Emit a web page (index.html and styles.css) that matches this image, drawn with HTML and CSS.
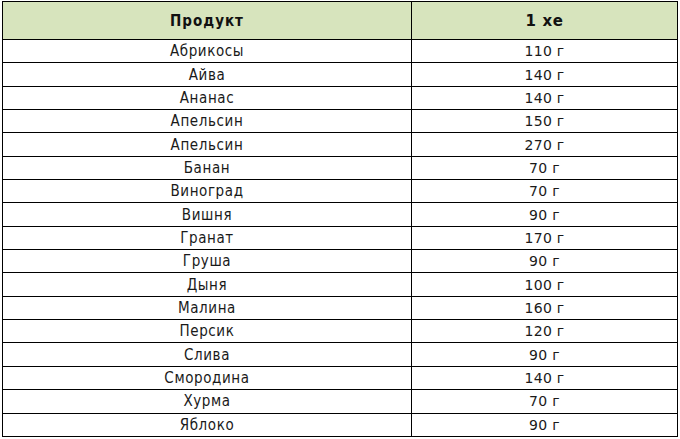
FILE: index.html
```html
<!DOCTYPE html>
<html lang="ru">
<head>
<meta charset="utf-8">
<title>ХЕ</title>
<link rel="stylesheet" href="styles.css">
</head>
<body>
<table class="xe-table">
  <thead>
    <tr class="head-row"><th class="col-product">Продукт</th><th class="col-xe">1 хе</th></tr>
  </thead>
  <tbody>
    <tr><td class="name">Абрикосы</td><td class="val">110 г</td></tr>
    <tr><td class="name">Айва</td><td class="val">140 г</td></tr>
    <tr><td class="name">Ананас</td><td class="val">140 г</td></tr>
    <tr><td class="name">Апельсин</td><td class="val">150 г</td></tr>
    <tr><td class="name">Апельсин</td><td class="val">270 г</td></tr>
    <tr><td class="name">Банан</td><td class="val">70 г</td></tr>
    <tr><td class="name">Виноград</td><td class="val">70 г</td></tr>
    <tr><td class="name">Вишня</td><td class="val">90 г</td></tr>
    <tr><td class="name">Гранат</td><td class="val">170 г</td></tr>
    <tr><td class="name">Груша</td><td class="val">90 г</td></tr>
    <tr><td class="name">Дыня</td><td class="val">100 г</td></tr>
    <tr><td class="name">Малина</td><td class="val">160 г</td></tr>
    <tr><td class="name">Персик</td><td class="val">120 г</td></tr>
    <tr><td class="name">Слива</td><td class="val">90 г</td></tr>
    <tr><td class="name">Смородина</td><td class="val">140 г</td></tr>
    <tr><td class="name">Хурма</td><td class="val">70 г</td></tr>
    <tr><td class="name">Яблоко</td><td class="val">90 г</td></tr>
  </tbody>
</table>
</body>
</html>
```
FILE: styles.css
```css
html, body {
  margin: 0;
  padding: 0;
  background: #ffffff;
}
body {
  padding: 1px 0 0 2px;
}
.xe-table {
  border-collapse: collapse;
  width: 676px;
  table-layout: fixed;
  color: #1a1a1a;
}
.xe-table th,
.xe-table td {
  border: 1px solid #000000;
  padding: 0;
  text-align: center;
  vertical-align: middle;
}
.col-product { width: 408px; }
.head-row { height: 38px; }
.head-row th {
  background: #d7e4bd;
  font-weight: bold;
  color: #111111;
}
.col-product {
  font-family: "DejaVu Sans Condensed", "DejaVu Sans", sans-serif;
  font-size: 15px;
  letter-spacing: 1px;
}
.col-xe {
  font-family: "DejaVu Sans", sans-serif;
  font-size: 15px;
  letter-spacing: 0.6px;
}
tbody tr { height: 23.35px; }
.name {
  font-family: "DejaVu Sans Condensed", "DejaVu Sans", sans-serif;
  font-size: 15px;
  letter-spacing: 0.6px;
}
.val {
  font-family: "DejaVu Sans", sans-serif;
  font-size: 14px;
  letter-spacing: 0.3px;
}
```
